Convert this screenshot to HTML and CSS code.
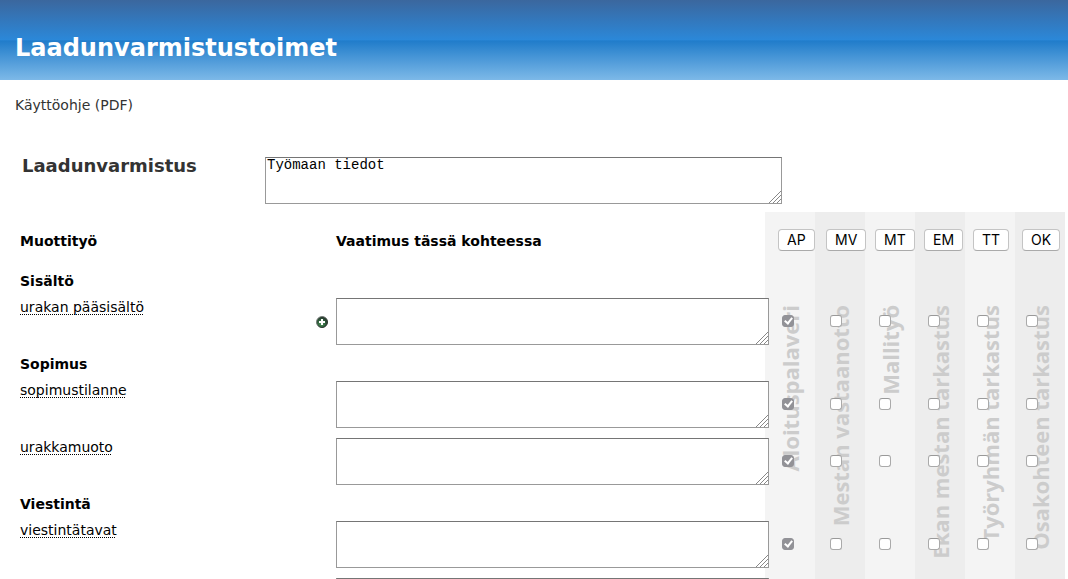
FILE: index.html
```html
<!DOCTYPE html>
<html lang="fi">
<head>
<meta charset="utf-8">
<title>Laadunvarmistustoimet</title>
<link rel="stylesheet" href="styles.css">
</head>
<body>
<header class="banner"><h1>Laadunvarmistustoimet</h1></header>
<nav class="help"><a href="#ohje">Käyttöohje (PDF)</a></nav>
<main>
  <div class="site">
    <label class="site-label" for="site-info">Laadunvarmistus</label>
    <textarea class="box site-info" id="site-info">Työmaan tiedot</textarea>
  </div>
  <section class="plan">
    <div class="stripes" aria-hidden="true">
      <div class="stripe"><span>Aloituspalaveri</span></div>
      <div class="stripe"><span>Mestan vastaanotto</span></div>
      <div class="stripe"><span>Mallityö</span></div>
      <div class="stripe"><span>Ekan mestan tarkastus</span></div>
      <div class="stripe"><span>Työryhmän tarkastus</span></div>
      <div class="stripe"><span>Osakohteen tarkastus</span></div>
    </div>
    <table class="checks">
      <colgroup>
        <col class="col-name"><col class="col-add"><col>
        <col class="col-first"><col class="col-check"><col class="col-check"><col class="col-check"><col class="col-check"><col class="col-last">
      </colgroup>
      <thead>
        <tr>
          <th colspan="2">Muottityö</th>
          <th>Vaatimus tässä kohteessa</th>
          <th><button type="button">AP</button></th>
          <th><button type="button">MV</button></th>
          <th><button type="button">MT</button></th>
          <th><button type="button">EM</button></th>
          <th><button type="button">TT</button></th>
          <th><button type="button">OK</button></th>
        </tr>
      </thead>
      <tbody>
        <tr class="group"><th colspan="9">Sisältö</th></tr>
        <tr class="item">
          <td class="name"><label for="r1">urakan pääsisältö</label></td>
          <td><button type="button" class="add" aria-label="Lisää"><svg viewBox="0 0 12 12" width="12" height="12"><defs><radialGradient id="orb" cx="45%" cy="65%" r="60%"><stop offset="0" stop-color="#4f9a5c"/><stop offset=".6" stop-color="#2f5f3c"/><stop offset="1" stop-color="#26332b"/></radialGradient><linearGradient id="shine" x1="0" y1="0" x2="1" y2="1"><stop offset="0" stop-color="#a5aaa7"/><stop offset=".6" stop-color="#37433b"/><stop offset="1" stop-color="#151d18"/></linearGradient></defs><circle cx="6" cy="6" r="5.5" fill="url(#orb)" stroke="url(#shine)"/><path d="M5 3h2v2h2v2H7v2H5V7H3V5h2z" fill="#fff"/></svg></button></td>
          <td><textarea class="box" id="r1"></textarea></td>
          <td><input type="checkbox" aria-label="AP" checked></td><td><input type="checkbox" aria-label="MV"></td><td><input type="checkbox" aria-label="MT"></td><td><input type="checkbox" aria-label="EM"></td><td><input type="checkbox" aria-label="TT"></td><td><input type="checkbox" aria-label="OK"></td>
        </tr>
        <tr class="group"><th colspan="9">Sopimus</th></tr>
        <tr class="item">
          <td class="name"><label for="r2">sopimustilanne</label></td>
          <td></td>
          <td><textarea class="box" id="r2"></textarea></td>
          <td><input type="checkbox" aria-label="AP" checked></td><td><input type="checkbox" aria-label="MV"></td><td><input type="checkbox" aria-label="MT"></td><td><input type="checkbox" aria-label="EM"></td><td><input type="checkbox" aria-label="TT"></td><td><input type="checkbox" aria-label="OK"></td>
        </tr>
        <tr class="item">
          <td class="name"><label for="r3">urakkamuoto</label></td>
          <td></td>
          <td><textarea class="box" id="r3"></textarea></td>
          <td><input type="checkbox" aria-label="AP" checked></td><td><input type="checkbox" aria-label="MV"></td><td><input type="checkbox" aria-label="MT"></td><td><input type="checkbox" aria-label="EM"></td><td><input type="checkbox" aria-label="TT"></td><td><input type="checkbox" aria-label="OK"></td>
        </tr>
        <tr class="group"><th colspan="9">Viestintä</th></tr>
        <tr class="item">
          <td class="name"><label for="r4">viestintätavat</label></td>
          <td></td>
          <td><textarea class="box" id="r4"></textarea></td>
          <td><input type="checkbox" aria-label="AP" checked></td><td><input type="checkbox" aria-label="MV"></td><td><input type="checkbox" aria-label="MT"></td><td><input type="checkbox" aria-label="EM"></td><td><input type="checkbox" aria-label="TT"></td><td><input type="checkbox" aria-label="OK"></td>
        </tr>
        <tr class="item">
          <td></td>
          <td></td>
          <td><textarea class="box" aria-label="Vaatimus"></textarea></td>
          <td></td><td></td><td></td><td></td><td></td><td></td>
        </tr>
      </tbody>
    </table>
  </section>
</main>
</body>
</html>
```
FILE: styles.css
```css
*, *::after { box-sizing: border-box; }

body {
  margin: 0;
  background: #fff;
  color: #000;
  font: 14px/18px Verdana, "DejaVu Sans", sans-serif;
}

.banner {
  height: 80px;
  padding: 33px 15px 0;
  background: linear-gradient(#3b679e 0%, #2b88d9 50%, #207cca 51%, #7db9e8 100%);
}

.banner h1 {
  margin: 0;
  color: #fff;
  font-size: 24px;
  line-height: 30px;
}

.help { padding: 16px 15px 0; }
.help a { color: #333; text-decoration: none; }

.site {
  display: flex;
  align-items: flex-start;
  padding: 43px 22px 8px;
}

.site-label {
  width: 243px;
  color: #333;
  font-size: 18px;
  font-weight: bold;
}

.box {
  display: block;
  width: 100%;
  height: 47px;
  margin: 0;
  padding: 0 1px;
  border: 1px solid #999;
  border-top-color: #757575;
  border-radius: 0;
  background: #fff;
  color: #000;
  font: 14px/15px "Liberation Mono", "Courier New", monospace;
  resize: both;
}

.box::-webkit-resizer {
  background: url("data:image/svg+xml,%3Csvg xmlns='http://www.w3.org/2000/svg' width='15' height='15'%3E%3Cpath d='M3 15 15 3M7 15l8-8M11 15l4-4' stroke='%23888' fill='none'/%3E%3C/svg%3E") no-repeat right bottom;
}

.site .site-info { width: 517px; }

.plan { position: relative; }

.stripes {
  position: absolute;
  top: 0;
  right: 3px;
  bottom: 0;
  display: flex;
}

.stripe {
  display: flex;
  align-items: flex-start;
  justify-content: center;
  width: 50px;
  padding-top: 93px;
  background: #f4f4f4;
}

.stripe:nth-child(even) { background: #ededed; }

.stripe span {
  color: #ccc;
  font: bold 22px/26px "Open Sans", sans-serif;
  white-space: nowrap;
  writing-mode: vertical-rl;
  transform: rotate(180deg);
}

.checks {
  position: relative;
  width: calc(100% - 3px);
  border-collapse: collapse;
  table-layout: fixed;
}

.col-name { width: 316px; }
.col-add { width: 20px; }
.col-first { width: 48px; }
.col-check { width: 49px; }
.col-last { width: 43px; }

.checks th,
.checks td {
  padding: 0;
  text-align: left;
}

.checks thead th { height: 56px; padding-top: 2px; }
.checks thead th:nth-child(n+3) { padding-top: 0; }
.checks thead th:nth-child(2) { padding-top: 2px; }
.checks tr > :first-child { padding-left: 20px; }
.checks .group th { height: 26px; }
.checks .item td { height: 57px; padding-top: 4px; padding-bottom: 6px; }
.checks .item td:nth-child(n+4) { padding-bottom: 8px; }
.checks .item .name { vertical-align: top; }

.name label {
  text-decoration: underline dotted 1px;
  text-decoration-skip-ink: none;
  text-underline-offset: 2px;
}

.checks .box { width: calc(100% - 9px); }

.checks th button {
  display: block;
  height: 22px;
  padding: 0 8px;
  border: 1px solid #c4c4c4;
  border-bottom-color: #aaa;
  border-radius: 4px;
  background: #fff;
  color: #000;
  font: 14px/20px Inter, sans-serif;
}

.add {
  display: block;
  padding: 0;
  border: 0;
  background: none;
}

.add svg { display: block; }

input[type="checkbox"] {
  appearance: none;
  display: block;
  width: 12px;
  height: 12px;
  margin: 0 0 0 4px;
  border: 1px solid #aaa;
  border-top-color: #999;
  border-radius: 3px;
  background: #fff;
}

input[type="checkbox"]:checked {
  border-color: #929297;
  background: #929297;
}

input[type="checkbox"]:checked::after {
  content: "";
  display: block;
  width: 5px;
  height: 8px;
  margin-left: 3px;
  border: solid #fff;
  border-width: 0 2px 2px 0;
  transform: rotate(38deg);
}
```
